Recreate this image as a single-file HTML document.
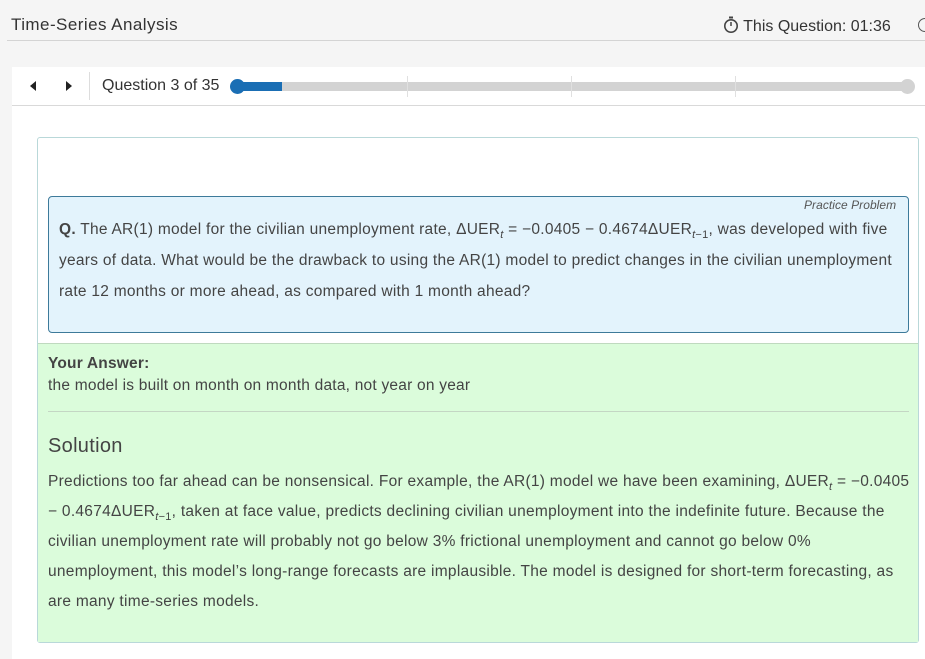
<!DOCTYPE html>
<html><head><meta charset="utf-8"><style>
*{margin:0;padding:0;box-sizing:border-box}
body{width:925px;height:659px;background:#f5f5f5;font-family:"Liberation Sans",sans-serif;color:#333;position:relative;overflow:hidden}
.abs{position:absolute}
sub{font-size:11px;vertical-align:-4px;line-height:0}
</style></head><body>
<div class="abs" style="left:11px;top:15px;font-size:17px;color:#333;letter-spacing:0.45px">Time-Series Analysis</div>
<div class="abs" style="left:723px;top:16px;font-size:16px;color:#333;white-space:nowrap">
<svg width="16" height="18" viewBox="0 0 16 18" style="vertical-align:-3px"><rect x="6" y="0.5" width="4" height="2" fill="#444"/><circle cx="8" cy="10" r="6.2" fill="none" stroke="#444" stroke-width="1.6"/><line x1="8" y1="10" x2="8" y2="6" stroke="#444" stroke-width="1.5"/></svg> This Question: 01:36</div>
<div class="abs" style="left:918px;top:18px;width:14px;height:14px;border:1.6px solid #555;border-radius:50%"></div>
<div class="abs" style="left:7px;top:40px;width:918px;height:1px;background:#d4d4d4"></div>
<div class="abs" style="left:12px;top:67px;width:913px;height:592px;background:#fff"></div>
<div class="abs" style="left:12px;top:105px;width:913px;height:1px;background:#d9d9d9"></div>
<svg class="abs" style="left:26px;top:79px" width="50" height="14"><polygon points="10,2 10,12 4,7" fill="#222"/><polygon points="40,2 40,12 46,7" fill="#222"/></svg>
<div class="abs" style="left:89px;top:72px;width:1px;height:28px;background:#ddd"></div>
<div class="abs" style="left:102px;top:77px;font-size:16px;color:#333">Question 3 of 35</div>
<div class="abs" style="left:237px;top:82px;width:670px;height:9px;background:#d3d3d3"></div>
<div class="abs" style="left:237px;top:82px;width:45px;height:9px;background:#1a6eb4"></div>
<div class="abs" style="left:230px;top:79px;width:15px;height:15px;border-radius:50%;background:#1a6eb4"></div>
<div class="abs" style="left:900px;top:79px;width:15px;height:15px;border-radius:50%;background:#d3d3d3"></div>
<div class="abs" style="left:407px;top:76px;width:1px;height:21px;background:#e0e0e0"></div>
<div class="abs" style="left:571px;top:76px;width:1px;height:21px;background:#e0e0e0"></div>
<div class="abs" style="left:735px;top:76px;width:1px;height:21px;background:#e0e0e0"></div>

<div class="abs" style="left:37px;top:137px;width:882px;height:506px;border:1px solid #b9d8d9;border-radius:3px;background:#fff"></div>
<div class="abs" style="left:48px;top:196px;width:861px;height:137px;border:1px solid #3d7a9a;border-radius:4px;background:#e3f3fc"></div>
<div class="abs" style="left:804px;top:198px;font-size:12px;font-style:italic;color:#555;letter-spacing:0.05px">Practice Problem</div>
<div class="abs" style="left:59px;top:214px;width:845px;font-size:15.5px;line-height:31px;color:#444;letter-spacing:0.27px"><b>Q.</b> The AR(1) model for the civilian unemployment rate, ΔUER<sub><i>t</i></sub> = −0.0405 − 0.4674ΔUER<sub><i>t</i>−1</sub>, was developed with five years of data. What would be the drawback to using the AR(1) model to predict changes in the civilian unemployment rate 12 months or more ahead, as compared with 1 month ahead?</div>

<div class="abs" style="left:38px;top:343px;width:880px;height:299px;background:#dbfcdb;border-top:1px solid #bfd9bf"></div>
<div class="abs" style="left:48px;top:355px;font-size:15.5px;font-weight:bold;color:#444;letter-spacing:0.2px">Your Answer:</div>
<div class="abs" style="left:48px;top:377px;font-size:15.5px;color:#444;letter-spacing:0.22px">the model is built on month on month data, not year on year</div>
<div class="abs" style="left:48px;top:411px;width:861px;height:1px;background:#c4d6c4"></div>
<div class="abs" style="left:48px;top:435px;font-size:20px;color:#444;letter-spacing:0.3px">Solution</div>
<div class="abs" style="left:48px;top:467px;width:868px;font-size:15.5px;line-height:30px;color:#444;letter-spacing:0.28px">Predictions too far ahead can be nonsensical. For example, the AR(1) model we have been examining, ΔUER<sub><i>t</i></sub> = −0.0405 − 0.4674ΔUER<sub><i>t</i>−1</sub>, taken at face value, predicts declining civilian unemployment into the indefinite future. Because the civilian unemployment rate will probably not go below 3% frictional unemployment and cannot go below 0% unemployment, this model’s long-range forecasts are implausible. The model is designed for short-term forecasting, as are many time-series models.</div>
</body></html>
